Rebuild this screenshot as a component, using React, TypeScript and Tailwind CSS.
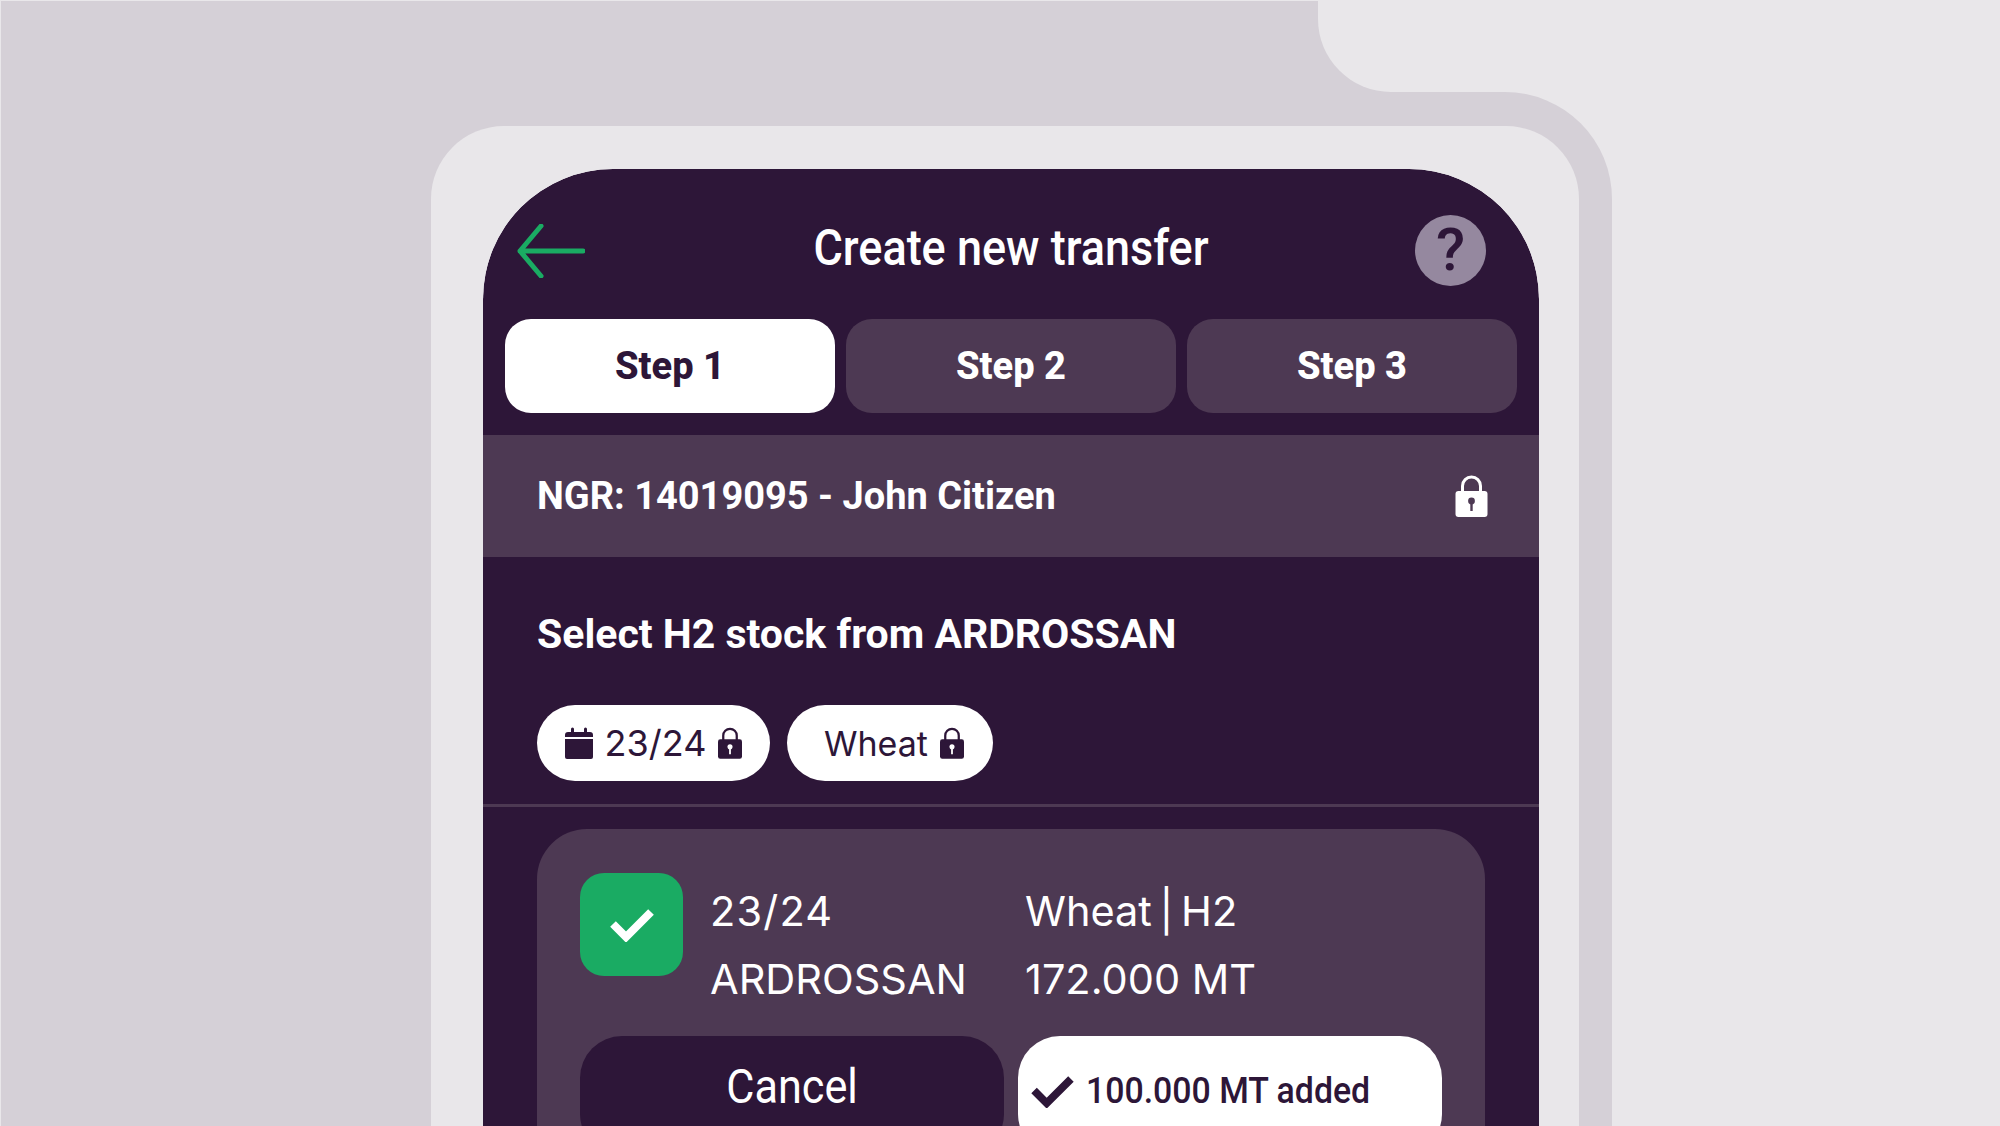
const DARK = '#2D1638'

function LockIcon({ className, hole }: { className: string; hole: string }) {
  return (
    <svg viewBox="0 0 32 42" className={className}>
      <path d="M7 18V11a9 9 0 0 1 18 0v7" fill="none" stroke="currentColor" strokeWidth="3" />
      <rect x="0" y="16" width="32" height="26" rx="3" fill="currentColor" />
      <circle cx="16" cy="26" r="3.4" fill={hole} />
      <rect x="14.8" y="27" width="2.4" height="9" fill={hole} />
    </svg>
  )
}

function CalendarIcon() {
  return (
    <svg viewBox="0 0 28 32" className="w-[28px] h-[32px] shrink-0">
      <path d="M0 8a3 3 0 0 1 3-3h3V2a1.5 1.5 0 0 1 3 0v3h10V2a1.5 1.5 0 0 1 3 0v3h3a3 3 0 0 1 3 3v2H0z" fill={DARK} />
      <path d="M0 12h28v18a2 2 0 0 1-2 2H2a2 2 0 0 1-2-2z" fill={DARK} />
    </svg>
  )
}

function Tab({ label, active }: { label: string; active?: boolean }) {
  return (
    <div
      className={`flex-1 h-[94px] rounded-[26px] flex items-center justify-center text-[38px] font-extrabold font-['Roboto',sans-serif] ${
        active ? 'bg-white text-[#2D1638]' : 'bg-[#4D3953] text-white'
      }`}
    >
      {label}
    </div>
  )
}

export default function App() {
  return (
    <div className="w-[2000px] h-[1126px] overflow-hidden bg-[#E9E7EA] pl-px pt-px flex font-['Inter',sans-serif]">
      <div className="w-[1611px] h-full flex flex-col">
        {/* notched top strip */}
        <div className="h-[91px] flex shrink-0 bg-[#D5D0D7]">
          <div className="flex-1" />
          <div className="w-[294px] h-full bg-[#E9E7EA] rounded-bl-[73px]" />
        </div>

        <div className="flex-1 bg-[#D5D0D7] rounded-tr-[107px] pl-[430px] pr-[33px] pt-[34px] min-h-0">
          <div className="h-full bg-[#E9E7EA] rounded-t-[73px] pl-[52px] pr-[40px] pt-[43px]">
            <div className="h-full bg-white rounded-t-[130px] overflow-hidden">
              <div className="h-full bg-[#2D1638] rounded-t-[130px] overflow-hidden text-white">
                {/* header */}
                <div className="h-[150px] pt-[12px] flex items-center">
                  <div className="w-[130px] pl-[34px] mt-[2px]">
                    <svg viewBox="0 0 68 54" className="w-[68px] h-[54px]" fill="none" stroke="#1AAB63" strokeWidth="5" strokeLinecap="round" strokeLinejoin="round">
                      <path d="M24 2 3 27l21 25M3 27h63" />
                    </svg>
                  </div>
                  <div className="flex-1 mb-[4px] text-center text-[50px] leading-none font-medium font-['Roboto',sans-serif] scale-x-[0.9] whitespace-nowrap">Create new transfer</div>
                  <div className="w-[130px] pr-[53px] flex justify-end">
                    <div className="w-[71px] h-[71px] shrink-0 rounded-full bg-[#95889F] flex items-center justify-center text-[#2D1638] text-[60px] font-medium leading-none font-['Roboto',sans-serif]">?</div>
                  </div>
                </div>

                {/* steps */}
                <div className="px-[22px] flex gap-[11px]">
                  <Tab label="Step 1" active />
                  <Tab label="Step 2" />
                  <Tab label="Step 3" />
                </div>

                {/* ngr band */}
                <div className="mt-[22px] h-[122px] bg-[#4D3953] pl-[54px] pr-[51px] flex items-center justify-between">
                  <span className="text-[38px] font-bold font-['Roboto',sans-serif]">NGR: 14019095 - John Citizen</span>
                  <LockIcon className="w-[33px] h-[42px] text-white" hole="#4D3953" />
                </div>

                <div className="pl-[54px] pt-[52px] h-[250px] border-b-[3px] border-[#4D3953]">
                  <div className="text-[41px] leading-[50px] font-bold font-['Roboto',sans-serif]">Select H2 stock from ARDROSSAN</div>
                  <div className="flex gap-[17px] mt-[46px] text-[#2D1638] text-[36px]">
                    <div className="h-[76px] w-[233px] rounded-full bg-white flex items-center justify-center gap-[12px]">
                      <CalendarIcon />
                      <span>23/24</span>
                      <LockIcon className="w-[24px] h-[32px] text-[#2D1638]" hole="#ffffff" />
                    </div>
                    <div className="h-[76px] w-[206px] rounded-full bg-white flex items-center justify-center gap-[12px] pl-[8px]">
                      <span className="text-[34px]">Wheat</span>
                      <LockIcon className="w-[24px] h-[32px] text-[#2D1638]" hole="#ffffff" />
                    </div>
                  </div>
                </div>

                {/* stock card */}
                <div className="mx-[54px] mt-[22px] rounded-[50px] bg-[#4D3953] pl-[43px] pt-[44px] h-[400px]">
                  <div className="flex">
                    <div className="w-[103px] h-[103px] rounded-[24px] bg-[#1AAB63] flex items-center justify-center shrink-0">
                      <svg viewBox="0 0 44 34" className="w-[44px] h-[34px]" fill="none" stroke="#ffffff" strokeWidth="8">
                        <path d="M3 16l13 13L41 4" />
                      </svg>
                    </div>
                    <div className="ml-[27px] grid grid-cols-[315px_1fr] text-[41.5px] leading-[68px] mt-[4px]">
                      <div className="tracking-[1.2px]">23/24</div>
                      <div className="[word-spacing:-4px]">Wheat | H2</div>
                      <div>ARDROSSAN</div>
                      <div>172.000 MT</div>
                    </div>
                  </div>
                  <div className="flex gap-[14px] mt-[23px]">
                    <div className="w-[424px] h-[120px] rounded-[42px] bg-[#2D1638] flex items-center justify-center pb-[18px] text-[48px] font-['Roboto',sans-serif]">
                      <span className="scale-x-[0.9]">Cancel</span>
                    </div>
                    <div className="w-[424px] h-[120px] rounded-[42px] bg-white text-[#2D1638] flex items-center pl-[13px] gap-[12px] pb-[10px]">
                      <svg viewBox="0 0 44 34" className="w-[43px] h-[33px] shrink-0" fill="none" stroke="#2D1638" strokeWidth="8">
                        <path d="M3 16l13 13L41 4" />
                      </svg>
                      <span className="text-[36px] font-medium font-['Roboto',sans-serif] whitespace-nowrap scale-x-[0.94] origin-left">100.000 MT added</span>
                    </div>
                  </div>
                </div>
              </div>
            </div>
          </div>
        </div>
      </div>
    </div>
  )
}
